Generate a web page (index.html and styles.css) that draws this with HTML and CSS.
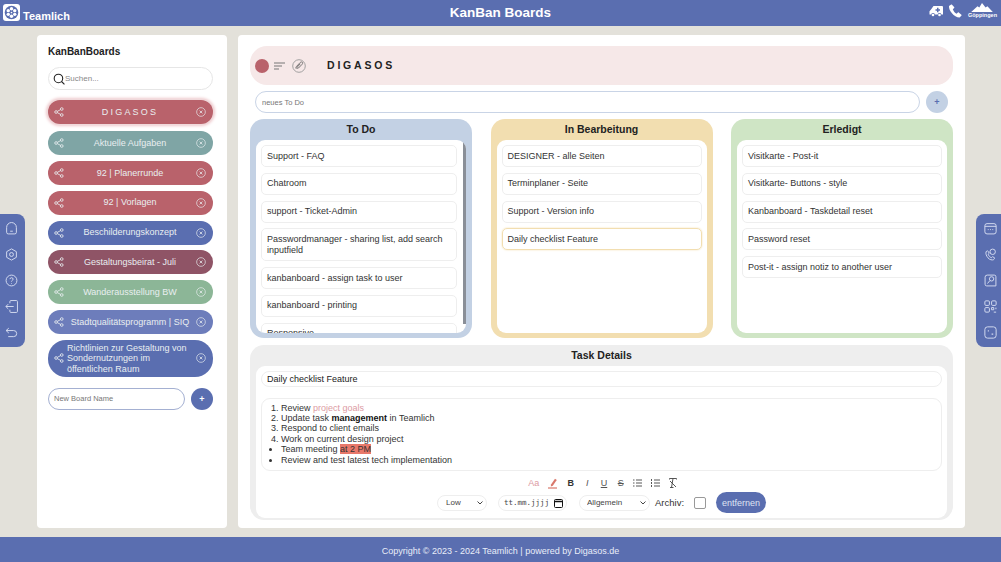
FILE: index.html
```html
<!DOCTYPE html>
<html lang="de">
<head>
  <meta charset="UTF-8">
  <meta name="viewport" content="width=device-width, initial-scale=1.0">
  <title>Teamlich - KanBan Boards</title>
  <link rel="stylesheet" href="styles.css">
</head>
<body>
  <svg class="defs" width="0" height="0">
    <symbol id="share" viewBox="0 0 12 12">
      <g fill="none" stroke="currentColor" stroke-width="1">
        <circle cx="2.5" cy="6" r="1.6"/><circle cx="9.3" cy="2.4" r="1.6"/><circle cx="9.3" cy="9.6" r="1.6"/>
        <path d="M4 5.2 7.8 3.2M4 6.8l3.8 2"/>
      </g>
    </symbol>
    <symbol id="close" viewBox="0 0 12 12">
      <circle cx="6" cy="6" r="5.2" fill="none" stroke="currentColor" stroke-width=".8"/>
      <path d="M4.3 4.3l3.4 3.4M7.7 4.3 4.3 7.7" stroke="currentColor" stroke-width=".9"/>
    </symbol>
  </svg>

  <header class="topbar">
    <div class="brand">
      <svg class="brand-logo" viewBox="0 0 20 20">
        <rect width="20" height="20" rx="3.5" fill="#fff"/>
        <circle cx="10" cy="10" r="8" fill="#5a6eb0"/>
        <g fill="#fff">
          <circle cx="10" cy="5.6" r="2"/><circle cx="10" cy="14.4" r="2"/>
          <circle cx="6.2" cy="7.8" r="2"/><circle cx="13.8" cy="7.8" r="2"/>
          <circle cx="6.2" cy="12.2" r="2"/><circle cx="13.8" cy="12.2" r="2"/>
          <circle cx="10" cy="10" r="1"/>
        </g>
      </svg>
      <span>Teamlich</span>
    </div>
    <h1 class="topbar-title">KanBan Boards</h1>
    <div class="topbar-icons">
      <svg width="14" height="12" viewBox="0 0 14 12" fill="#fff">
        <path d="M4.5 1H13a1 1 0 0 1 1 1v7.5h-1.600a1.900 1.900 0 0 0-3.700 0H5.900a1.900 1.900 0 0 0-3.700 0H.5V6.200L2 4.500z"/>
        <circle cx="4" cy="10" r="1.300"/><circle cx="10.500" cy="10" r="1.300"/>
        <path d="M8 2.700h1.500v1.500H11v1.500H9.500v1.500H8V5.700H6.500V4.200H8z" fill="#5a6eb0"/>
      </svg>
      <svg width="14" height="14" viewBox="0 0 14 14" fill="#fff">
        <path d="M3.200.6 1 2.100C.5 6.500 6 13.500 11.600 13.600l1.900-2.100c.2-.3.100-.6-.1-.8L10.700 8.500c-.3-.2-.6-.2-.8 0L8.600 9.700C7 9 5.400 7 4.800 5.200l1.300-1.100c.2-.2.300-.5.200-.8L4 .8C3.800.5 3.500.4 3.200.6z"/>
      </svg>
      <div class="city">
        <svg width="24" height="9" viewBox="0 0 24 10" fill="#fff">
          <path d="M0 10 7 3.500l2 1.500L12 0l4 5 2-1.300L24 10z"/>
        </svg>
        <span>Göppingen</span>
      </div>
    </div>
  </header>

  <div class="page">
    <nav class="rail rail-left">
      <svg viewBox="0 0 12 12"><path d="M1.500 5a4.500 4.500 0 0 1 9 0v4.500a1.500 1.500 0 0 1-1.500 1.500H3a1.500 1.500 0 0 1-1.500-1.500zM4.800 8.500h2.400"/></svg>
      <svg viewBox="0 0 12 12"><path d="M6 .8l4.500 2.600v5.200L6 11.200 1.500 8.600V3.400z"/><circle cx="6" cy="6" r="1.800"/></svg>
      <svg viewBox="0 0 12 12"><circle cx="6" cy="6" r="5"/><path d="M4.500 4.700C4.700 3 7.500 3 7.500 4.700c0 1.200-1.500 1.100-1.500 2.300M6 8.500v.6"/></svg>
      <svg viewBox="0 0 12 12"><path d="M4.500 3V1.500a1 1 0 0 1 1-1h5a1 1 0 0 1 1 1v9a1 1 0 0 1-1 1h-5a1 1 0 0 1-1-1V9M8 6H.8M3 3.800.8 6 3 8.200"/></svg>
      <svg viewBox="0 0 12 12"><path d="M3.500 2 1 4.200l2.500 2.300M1 4.200h7a2.800 2.800 0 0 1 0 5.600H3"/></svg>
    </nav>

    <aside class="boards">
      <h2 class="boards-title">KanBanBoards</h2>
      <div class="search">
        <svg width="12" height="12" viewBox="0 0 11 11" fill="none" stroke="#222" stroke-width="1"><circle cx="5" cy="5" r="3.900"/><path d="m7.800 7.800 2.700 2.700"/></svg>
        <span>Suchen...</span>
      </div>

      <ul class="board-list">
        <li class="board board-red board-active"><svg class="board-share"><use href="#share"/></svg><span class="board-name spaced">DIGASOS</span><svg class="board-close"><use href="#close"/></svg></li>
        <li class="board board-teal"><svg class="board-share"><use href="#share"/></svg><span class="board-name">Aktuelle Aufgaben</span><svg class="board-close"><use href="#close"/></svg></li>
        <li class="board board-red"><svg class="board-share"><use href="#share"/></svg><span class="board-name">92 | Planerrunde</span><svg class="board-close"><use href="#close"/></svg></li>
        <li class="board board-red"><svg class="board-share"><use href="#share"/></svg><span class="board-name">92 | Vorlagen</span><svg class="board-close"><use href="#close"/></svg></li>
        <li class="board board-blue"><svg class="board-share"><use href="#share"/></svg><span class="board-name">Beschilderungskonzept</span><svg class="board-close"><use href="#close"/></svg></li>
        <li class="board board-wine"><svg class="board-share"><use href="#share"/></svg><span class="board-name">Gestaltungsbeirat - Juli</span><svg class="board-close"><use href="#close"/></svg></li>
        <li class="board board-green"><svg class="board-share"><use href="#share"/></svg><span class="board-name">Wanderausstellung BW</span><svg class="board-close"><use href="#close"/></svg></li>
        <li class="board board-violet"><svg class="board-share"><use href="#share"/></svg><span class="board-name">Stadtqualitätsprogramm | SIQ</span><svg class="board-close"><use href="#close"/></svg></li>
        <li class="board board-blue board-long"><svg class="board-share"><use href="#share"/></svg><span class="board-name">Richtlinien zur Gestaltung von Sondernutzungen im öffentlichen Raum</span><svg class="board-close"><use href="#close"/></svg></li>
      </ul>

      <div class="new-board">
        <input class="new-board-input" type="text" placeholder="New Board Name">
        <button class="round-btn" type="button">+</button>
      </div>
    </aside>

    <main class="content">
      <div class="board-head">
        <span class="dot"></span>
        <svg width="11" height="8" viewBox="0 0 11 8" fill="none" stroke="#777" stroke-width="1"><path d="M0 1h11M0 4h8M0 7h5"/></svg>
        <svg class="clip" width="14" height="14" viewBox="0 0 14 14" fill="none" stroke="#666" stroke-width=".9"><circle cx="7" cy="7" r="6.300" stroke="#999"/><path d="M4.300 9.800c-1-1 0-2.200.6-2.800l3.300-3.500c1.700-1.500 3.300.3 1.900 1.800L6.500 9c-1 .9-2 0-1.200-1l3-3.200"/></svg>
        <h2 class="board-head-title">DIGASOS</h2>
      </div>

      <div class="new-todo">
        <input class="new-todo-input" type="text" placeholder="neues To Do">
        <button class="round-btn round-btn-light" type="button">+</button>
      </div>

      <section class="columns">
        <div class="column column-todo">
          <h3 class="column-title">To Do</h3>
          <div class="column-body column-scroll">
            <div class="card">Support - FAQ</div>
            <div class="card">Chatroom</div>
            <div class="card">support - Ticket-Admin</div>
            <div class="card">Passwordmanager - sharing list, add search inputfield</div>
            <div class="card">kanbanboard - assign task to user</div>
            <div class="card">kanbanboard - printing</div>
            <div class="card">Responsive</div>
            <span class="scroll-thumb"></span>
          </div>
        </div>
        <div class="column column-doing">
          <h3 class="column-title">In Bearbeitung</h3>
          <div class="column-body">
            <div class="card">DESIGNER - alle Seiten</div>
            <div class="card">Terminplaner - Seite</div>
            <div class="card">Support - Version info</div>
            <div class="card card-active">Daily checklist Feature</div>
          </div>
        </div>
        <div class="column column-done">
          <h3 class="column-title">Erledigt</h3>
          <div class="column-body">
            <div class="card">Visitkarte - Post-it</div>
            <div class="card">Visitkarte- Buttons - style</div>
            <div class="card">Kanbanboard - Taskdetail reset</div>
            <div class="card">Password reset</div>
            <div class="card">Post-it - assign notiz to another user</div>
          </div>
        </div>
      </section>

      <section class="details">
        <h3 class="column-title">Task Details</h3>
        <div class="details-body">
          <div class="details-name">Daily checklist Feature</div>
          <div class="details-text">
            <ol>
              <li>Review <span class="pink">project goals</span></li>
              <li>Update task <strong>management</strong> in Teamlich</li>
              <li>Respond to client emails</li>
              <li>Work on current design project</li>
            </ol>
            <ul>
              <li>Team meeting <mark>at 2 PM</mark></li>
              <li>Review and test latest tech implementation</li>
            </ul>
          </div>
          <div class="toolbar">
            <span class="tool-aa">Aa</span>
            <svg width="10" height="11" viewBox="0 0 10 11"><path d="M3 6.500 7 .8l1.800 1.300-4 5.700-2 .6z" fill="#d9786c"/><path d="M0 10h9" stroke="#d9786c" stroke-width="1.200"/></svg>
            <b class="tool">B</b>
            <i class="tool tool-thin">I</i>
            <u class="tool tool-thin">U</u>
            <s class="tool tool-thin">S</s>
            <svg width="9" height="8" viewBox="0 0 9 8" stroke="#444" stroke-width=".9"><path d="M3 1h6M3 4h6M3 7h6M0 1h1.500M0 4h1.500M0 7h1.500"/></svg>
            <svg width="9" height="8" viewBox="0 0 9 8" stroke="#444" stroke-width=".9"><path d="M3 1h6M3 4h6M3 7h6M.5 0v2M.5 3v2M.5 6v2"/></svg>
            <svg width="8" height="10" viewBox="0 0 8 10" fill="none" stroke="#444" stroke-width=".9"><path d="M.5 1.500V.5h7v1M4 .5 2.500 9.500M1 9.500h3.500M1 3l6 6"/></svg>
          </div>
          <div class="controls">
            <select class="field field-low"><option>Low</option></select>
            <div class="field field-date">
              <span>tt.mm.jjjj</span>
              <svg width="9" height="10" viewBox="0 0 9 10" fill="none" stroke="#111" stroke-width="1"><rect x=".5" y="1.500" width="8" height="8" rx="1"/><path d="M.5 3.500h8" stroke-width="1.500"/></svg>
            </div>
            <select class="field field-cat"><option>Allgemein</option></select>
            <label class="archive">Archiv:<input class="archive-box" type="checkbox"></label>
            <button class="remove" type="button">entfernen</button>
          </div>
        </div>
      </section>
    </main>

    <nav class="rail rail-right">
      <svg viewBox="0 0 12 12"><rect x=".8" y="1.500" width="10.400" height="9.500" rx="2"/><path d="M.8 4h10.400M3.500 7h.8M5.600 7h.8M7.700 7h.8"/></svg>
      <svg viewBox="0 0 12 12"><circle cx="8" cy="3.500" r="2.500"/><path d="M2.500 2.800C.2 4.500 3.500 11.500 8 11c1.500-.2 1.700-1.200 1.700-2L7.800 8 6.800 9C5.500 8.500 4 6.800 3.800 5.800l1-.9L4 3.200c-.5-.6-1-.7-1.500-.4z"/></svg>
      <svg viewBox="0 0 12 12"><path d="M3 1h6.500a1.500 1.500 0 0 1 1.500 1.500V11H2.500A1.500 1.500 0 0 1 1 9.500V3a2 2 0 0 1 2-2z"/><circle cx="7" cy="4.500" r="2"/><path d="M5.500 6 3.200 8.800"/></svg>
      <svg viewBox="0 0 12 12"><rect x=".8" y=".8" width="4.200" height="4.200" rx="1"/><rect x="7" y=".8" width="4.200" height="4.200" rx="1"/><rect x=".8" y="7" width="4.200" height="4.200" rx="1"/><path d="M7 7h2v2H7zM11 7v1.500M9 11.200h2.200"/></svg>
      <svg viewBox="0 0 12 12"><rect x=".8" y=".8" width="10.400" height="10.400" rx="2.500"/><path d="M3.500 4.500h1M7 7.500h1.500" stroke-width="1.200"/></svg>
    </nav>
  </div>

  <footer class="footer">Copyright © 2023 - 2024 Teamlich | powered by Digasos.de</footer>
</body>
</html>
```

FILE: styles.css
```css
* {
  box-sizing: border-box;
}
html, body {
  height: 100%;
}
body {
  font-family: "Liberation Sans", Arial, sans-serif;
  font-size: 9px;
  line-height: 11px;
  color: #333;
  background-color: #e3e1da;
  margin: 0;
  display: flex;
  flex-direction: column;
  overflow: hidden;
}
h1, h2, h3, ul, ol {
  margin: 0;
  padding: 0;
}
.defs {
  position: absolute;
}

/* top bar */
.topbar {
  height: 26px;
  flex: none;
  background-color: #5a6eb0;
  color: white;
  display: grid;
  grid-template-columns: 1fr auto 1fr;
  align-items: center;
}
.brand {
  display: flex;
  align-items: center;
  gap: 3px;
  padding-left: 3px;
  font-size: 11px;
  font-weight: bold;
}
.brand span {
  margin-top: 7px;
}
.brand-logo {
  width: 17px;
  height: 17px;
  margin-top: -1px;
}
.topbar-title {
  font-size: 13.5px;
  margin-top: -2px;
}
.topbar-icons {
  display: flex;
  justify-content: flex-end;
  align-items: center;
  gap: 5px;
  padding-right: 4px;
  margin-top: -5px;
}
.city {
  display: flex;
  flex-direction: column;
  align-items: center;
  font-size: 5.5px;
  line-height: 6px;
  font-weight: bold;
  margin-left: 1px;
}

/* page frame */
.page {
  flex: 1;
  min-height: 0;
  display: flex;
  align-items: flex-start;
  gap: 11px;
  padding-top: 9px;
}
.rail {
  width: 25px;
  height: 133px;
  margin-top: 179px;
  flex: none;
  background-color: #5a6eb0;
  display: flex;
  flex-direction: column;
  align-items: center;
  justify-content: space-between;
  padding: 8px 0;
}
.rail svg {
  width: 13px;
  height: 13px;
  fill: none;
  stroke: #d3daf0;
  stroke-width: .9;
}
.rail-left {
  border-radius: 0 8px 8px 0;
  padding-right: 3px;
}
.rail-right {
  border-radius: 8px 0 0 8px;
  padding-left: 3px;
}

/* boards sidebar */
.boards {
  width: 190px;
  height: 493px;
  flex: none;
  margin-left: 1px;
  background: white;
  border-radius: 4px;
  padding: 11px 14px 11px 11px;
}
.boards-title {
  font-size: 10px;
  line-height: 12px;
  color: #222;
  margin-bottom: 9px;
}
.search {
  height: 23px;
  border: 1px solid #e6e6e6;
  border-radius: 12px;
  display: flex;
  align-items: center;
  padding-left: 4px;
  font-size: 8px;
  color: #888;
}
.board-list {
  list-style: none;
  margin-top: 10px;
  display: flex;
  flex-direction: column;
  gap: 5.800px;
}
.board {
  height: 24px;
  border-radius: 12px;
  color: #e9eef0;
  display: flex;
  align-items: center;
  padding: 0 7px 0 6px;
}
.board-long {
  height: 37px;
  border-radius: 18px;
}
.board-share {
  width: 10px;
  height: 10px;
  flex: none;
}
.board-close {
  width: 10px;
  height: 10px;
  flex: none;
}
.board-name {
  flex: 1;
  text-align: center;
  padding: 0 3px;
}
.board-long .board-name {
  text-align: left;
  line-height: 10.500px;
  padding: 0 2px 0 3px;
}
.spaced {
  letter-spacing: 2.200px;
}
.board-red { background-color: #b9626b; }
.board-teal { background-color: #7fa5a5; }
.board-blue { background-color: #5a6eb0; }
.board-wine { background-color: #8f5466; }
.board-green { background-color: #8cb697; }
.board-violet { background-color: #6d7dbb; }
.board-active {
  box-shadow: 0 0 0 1px #f0d9db, 0 0 3px 2px #eec9cc;
  margin-bottom: 1.500px;
}
.new-board {
  display: flex;
  gap: 6px;
  margin-top: 11px;
}
.new-board-input {
  width: 137px;
  height: 22px;
  border: 1px solid #a4b0d2;
  border-radius: 11px;
  padding: 0 5px;
  font: 7.500px "Liberation Sans", Arial, sans-serif;
  outline: none;
}
.round-btn {
  width: 22px;
  height: 22px;
  flex: none;
  border: none;
  border-radius: 50%;
  background-color: #5a6eb0;
  color: white;
  font: bold 9px "Liberation Sans", Arial, sans-serif;
  padding: 0;
}
::placeholder {
  color: #777;
}

/* main panel */
.content {
  width: 727px;
  height: 493px;
  flex: none;
  background: white;
  border-radius: 4px;
  padding: 11px 12px 8px;
  display: flex;
  flex-direction: column;
}
.board-head {
  height: 39px;
  flex: none;
  background-color: #f6e8e8;
  border-radius: 17px;
  display: flex;
  align-items: center;
  gap: 5px;
  padding-left: 5px;
}
.dot {
  width: 14px;
  height: 14px;
  border-radius: 50%;
  background-color: #b9626b;
}
.clip {
  margin-left: 2px;
}
.board-head-title {
  font-size: 10.500px;
  letter-spacing: 2.800px;
  color: #222;
  margin-left: 16px;
}
.new-todo {
  display: flex;
  align-items: center;
  gap: 6px;
  padding: 0 5px;
  margin-top: 6px;
  flex: none;
}
.new-todo-input {
  flex: 1;
  min-width: 0;
  height: 22px;
  border: 1px solid #c9d4e6;
  border-radius: 11px;
  padding: 0 6px;
  font: 7.500px "Liberation Sans", Arial, sans-serif;
  outline: none;
}
.round-btn-light {
  background-color: #c3d1e4;
  color: #5a6eb0;
  margin-right: 0;
}
.columns {
  display: grid;
  grid-template-columns: repeat(3, 222px);
  justify-content: space-between;
  margin-top: 6px;
  height: 219px;
  flex: none;
}
.column {
  border-radius: 14px;
  padding: 0 6px 5px;
  display: flex;
  flex-direction: column;
  min-height: 0;
}
.column-todo { background-color: #c3d1e4; }
.column-doing { background-color: #f2deb0; }
.column-done { background-color: #cfe5c5; }
.column-title {
  font-size: 10.500px;
  line-height: 21px;
  text-align: center;
  color: #222;
  flex: none;
}
.column-body {
  flex: 1;
  min-height: 0;
  background: white;
  border-radius: 9px;
  padding: 5px 5px;
  display: flex;
  flex-direction: column;
  gap: 5.800px;
}
.column-scroll {
  position: relative;
  overflow: hidden;
  padding-right: 9px;
}
.scroll-thumb {
  position: absolute;
  top: 0;
  right: 0;
  width: 3px;
  height: 184px;
  background-color: #8a8f98;
}
.card {
  flex: none;
  border: 1px solid #eee;
  border-radius: 5px;
  padding: 4.500px 5px;
  min-height: 22px;
  color: #333;
}
.card-active {
  border-color: #f2deb0;
  box-shadow: 0 0 2px #f2deb0;
}

/* task details */
.details {
  margin-top: 7px;
  height: 175px;
  flex: none;
  background-color: #eeeeee;
  border-radius: 14px;
  padding: 0 6px 5px;
  display: flex;
  flex-direction: column;
}
.details-body {
  flex: 1;
  background: white;
  border-radius: 9px;
  padding: 5px 5px;
}
.details-name {
  height: 16px;
  border: 1px solid #eee;
  border-radius: 8px;
  padding: 1.500px 5px;
  color: #222;
}
.details-text {
  height: 73px;
  margin-top: 11px;
  border: 1px solid #eee;
  border-radius: 9px;
  padding: 3.500px 0 0 19px;
  line-height: 10.400px;
  color: #333;
}
.details-text ol, .details-text ul {
  padding-left: 0;
}
.details-text strong {
  color: #111;
}
.pink {
  color: #dc9ba3;
}
mark {
  background-color: #e8786a;
  color: #333;
}
.toolbar {
  display: flex;
  align-items: center;
  justify-content: center;
  gap: 8.700px;
  height: 11px;
  margin-top: 6.500px;
  padding-left: 2px;
}
.tool {
  font-size: 9px;
  color: #333;
  width: 8px;
  text-align: center;
}
.tool-thin {
  color: #555;
}
.tool-aa {
  color: #dc9ba3;
  font-size: 9px;
}
.controls {
  display: flex;
  align-items: center;
  margin-top: 3.500px;
  padding-left: 176px;
}
.field {
  height: 16px;
  border: 1px solid #eee;
  border-radius: 8px;
  background: white;
  font: 8px "Liberation Sans", Arial, sans-serif;
  color: #444;
  padding: 0 3px 0 8px;
  outline: none;
}
select.field {
  appearance: none;
  background-image: url("data:image/svg+xml,%3Csvg xmlns='http://www.w3.org/2000/svg' width='6' height='4'%3E%3Cpath d='M.5.5 3 3 5.500.5' fill='none' stroke='%23444'/%3E%3C/svg%3E");
  background-repeat: no-repeat;
  background-position: right 3px center;
}
.field-low {
  width: 50px;
}
.field-date {
  width: 69px;
  margin-left: 11px;
  display: flex;
  align-items: center;
  justify-content: space-between;
  padding: 0 3px 0 5px;
  font-family: "DejaVu Sans Mono", "Liberation Mono", monospace;
  font-size: 7.500px;
}
.field-cat {
  width: 71px;
  margin-left: 12px;
  padding-left: 7px;
}
.archive {
  display: flex;
  align-items: center;
  margin-left: 5px;
  color: #333;
  font-size: 9.500px;
}
.archive-box {
  appearance: none;
  width: 12px;
  height: 12px;
  margin: 0 0 0 10px;
  border: 1px solid #999;
  border-radius: 2px;
}
.remove {
  width: 50px;
  height: 21px;
  margin-left: 10px;
  border: none;
  border-radius: 11px;
  background-color: #5a6eb0;
  color: #dfe5f4;
  font: 9px "Liberation Sans", Arial, sans-serif;
  padding: 0;
}

/* footer */
.footer {
  height: 25px;
  flex: none;
  background-color: #5a6eb0;
  color: #e9edf8;
  text-align: center;
  line-height: 29px;
  font-size: 9px;
}
```
